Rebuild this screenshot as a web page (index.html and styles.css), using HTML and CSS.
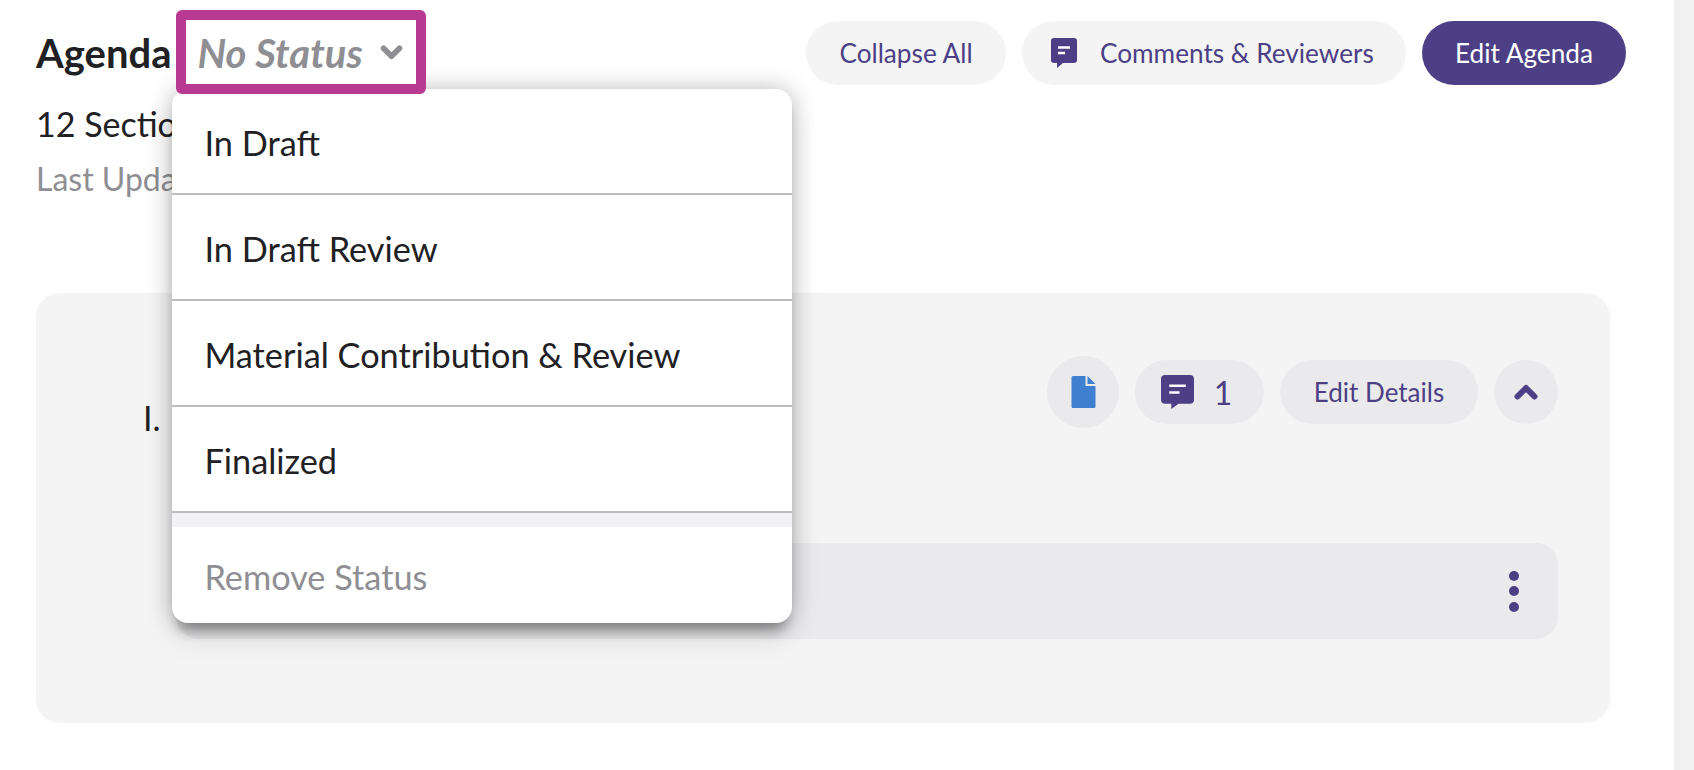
FILE: index.html
```html
<!DOCTYPE html>
<html lang="en">
<head>
<meta charset="utf-8">
<title>Agenda</title>
<link rel="stylesheet" href="styles.css">
</head>
<body>
<div class="page">
  <main class="main">
    <header class="header">
      <div class="title-group">
        <h1 class="title">Agenda</h1>
        <div class="status-wrap">
          <button class="status">
            <span class="status-label">No Status</span>
            <svg class="status-chevron" viewBox="0 0 24 16"><path d="M3.500 3.500l8.500 8.500 8.500-8.500" fill="none" stroke="#8e8e93" stroke-width="6" stroke-linecap="round" stroke-linejoin="round"/></svg>
          </button>
          <ul class="menu">
            <li class="menu-item">In Draft</li>
            <li class="menu-item">In Draft Review</li>
            <li class="menu-item">Material Contribution &amp; Review</li>
            <li class="menu-item">Finalized</li>
            <li class="menu-remove">Remove Status</li>
          </ul>
        </div>
      </div>
      <div class="actions">
        <button class="pill collapse">Collapse All</button>
        <button class="pill comments">
          <svg class="icon-sm" viewBox="0 0 26 30"><path d="M3 0h20a3 3 0 0 1 3 3v19a3 3 0 0 1-3 3H12l-6 5v-5H3a3 3 0 0 1-3-3V3a3 3 0 0 1 3-3z" fill="#4c3f85"/><path d="M7 9.500h12M7 15h7" stroke="#fff" stroke-width="2.400"/></svg>
          Comments &amp; Reviewers
        </button>
        <button class="pill primary">Edit Agenda</button>
      </div>
    </header>
    <p class="sections">12 Sections</p>
    <p class="updated">Last Updated</p>
    <section class="card">
      <div class="card-head">
        <span class="numeral">I.</span>
        <div class="card-tools">
          <button class="round doc">
            <svg viewBox="0 0 24 32" class="doc-icon"><path d="M1.500 0H14v10h10v20.500a1.500 1.500 0 0 1-1.500 1.500h-21A1.500 1.500 0 0 1 0 30.500V1.500A1.500 1.500 0 0 1 1.500 0z" fill="#3f7fcf"/><path d="M16 0l8 8h-8z" fill="#3f7fcf"/></svg>
          </button>
          <button class="tool count">
            <svg class="icon-md" viewBox="0 0 32 33"><path d="M4 0h24a4 4 0 0 1 4 4v20a4 4 0 0 1-4 4H17l-7 5v-5H4a4 4 0 0 1-4-4V4a4 4 0 0 1 4-4z" fill="#4c3f85"/><path d="M8 10.500h16M8 17h10" stroke="#fff" stroke-width="2.400"/></svg>
            1
          </button>
          <button class="tool edit">Edit Details</button>
          <button class="tool chevron">
            <svg viewBox="0 0 24 16" class="up-icon"><path d="M3.500 12.500l8.500-8.500 8.500 8.500" fill="none" stroke="#4c3f85" stroke-width="6" stroke-linecap="round" stroke-linejoin="round"/></svg>
          </button>
        </div>
      </div>
      <div class="item-row">
        <div class="kebab"><i></i><i></i><i></i></div>
      </div>
    </section>
  </main>
  <div class="scrollbar"></div>
</div>
</body>
</html>
```

FILE: styles.css
```css
* { box-sizing: border-box; }
html, body { margin: 0; height: 100%; overflow: hidden; background: #fff; }
body { font-family: Lato, "Open Sans", sans-serif; color: #212124; }
button { font-family: inherit; border: 0; cursor: pointer; padding: 0; }
.page { display: flex; height: 770px; }
.main { flex: 1; min-width: 0; padding: 10px 64px 0 36px; }
.scrollbar { width: 20px; background: #f1f1f1; }

.header { display: flex; justify-content: space-between; align-items: center; height: 84px; margin-right: -16px; }
.title-group { display: flex; align-items: center; gap: 5px; }
.title { margin: 2px 0 0; font-size: 40px; font-weight: 700; }
.status-wrap { position: relative; }
.status { position: relative; z-index: 2; display: flex; align-items: center; gap: 17px; width: 250px; height: 84px; padding: 2px 0 0 11px; background: #fff; border: 10px solid #b93a92; border-radius: 6px; }
.status-label { font-size: 40px; font-style: italic; font-weight: 700; color: #8e8e93; }
.status-chevron { width: 23px; height: 15px; margin-top: -2px; }

.menu { position: absolute; z-index: 1; top: 79px; left: -4px; width: 620px; margin: 0; padding: 0; list-style: none; background: #fff; border-radius: 16px; box-shadow: 0 14px 12px -6px rgba(0,0,0,.3), 0 0 24px rgba(0,0,0,.26), 0 16px 30px rgba(0,0,0,.08); overflow: hidden; }
.menu-item { display: flex; align-items: center; height: 106px; padding: 2px 32px 0; font-size: 34.300px; border-bottom: 2px solid #bdbdc1; }
.menu-remove { display: flex; align-items: center; height: 110px; padding: 2px 32px 0; font-size: 34.300px; color: #8e8e93; border-top: 14px solid #f1f1f6; }

.actions { display: flex; gap: 16px; margin-top: 2px; }
.pill { display: flex; align-items: center; height: 64px; border-radius: 32px; background: #f4f4f5; color: #4c3f85; font-size: 26.200px; white-space: nowrap; }
.collapse { width: 200px; justify-content: center; }
.comments { width: 384px; gap: 23px; padding-left: 29px; }
.primary { width: 204px; justify-content: center; background: #4c3f85; color: #fff; }
.icon-sm { width: 26px; height: 30px; }

.sections { margin: 10px 0 0; font-size: 34px; line-height: 40px; }
.updated { margin: 15px 0 0; font-size: 32px; line-height: 40px; color: #8e8e93; }

.card { height: 430px; margin-top: 94px; padding: 63px 52px 0 107px; background: #f4f4f4; border-radius: 24px; }
.card-head { display: flex; justify-content: space-between; align-items: flex-start; height: 187px; }
.numeral { margin-top: 42px; font-size: 34px; line-height: 40px; }
.card-tools { display: flex; align-items: center; gap: 16px; height: 72px; }
.round.doc { display: flex; align-items: center; justify-content: center; width: 72px; height: 72px; border-radius: 50%; background: #eaeaec; }
.doc-icon { width: 25px; height: 32px; }
.tool { display: flex; align-items: center; justify-content: center; height: 64px; border-radius: 32px; background: #eaeaec; color: #4c3f85; font-size: 26px; white-space: nowrap; }
.count { width: 129px; gap: 20px; padding-right: 6px; font-size: 32px; }
.edit { width: 198px; }
.icon-md { width: 33px; height: 34px; }
.chevron { width: 64px; }
.up-icon { width: 24px; height: 16px; }

.item-row { display: flex; justify-content: flex-end; align-items: center; height: 96px; margin-left: 33px; padding-right: 39px; background: #eaeaec; border-radius: 22px; }
.kebab { display: flex; flex-direction: column; gap: 5.500px; }
.kebab i { display: block; width: 10px; height: 10px; border-radius: 50%; background: #4c3f85; }
```
